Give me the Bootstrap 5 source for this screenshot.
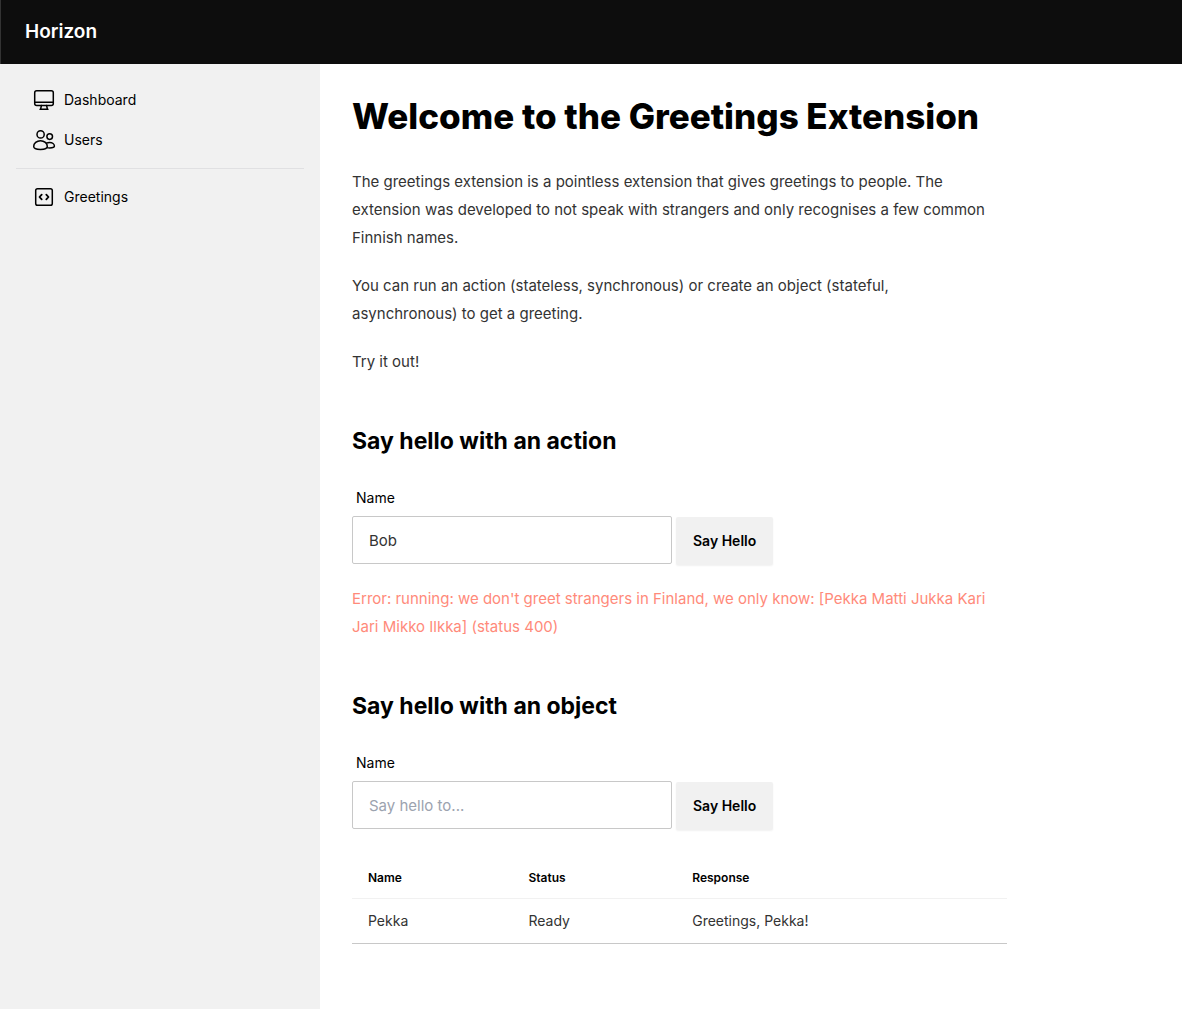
<!DOCTYPE html>
<html lang="en">
<head>
<meta charset="utf-8">
<meta name="viewport" content="width=device-width, initial-scale=1">
<title>Horizon</title>
<link href="https://cdn.jsdelivr.net/npm/bootstrap@5.3.0/dist/css/bootstrap.min.css" rel="stylesheet">
<style>
  body { font-family: Inter, "Liberation Sans", sans-serif; color: #000; }
  .topbar { background: #0d0d0d; min-height: 64px; border-left: 1px solid #333; }
  .topbar .navbar-brand { font-size: 19px; line-height: 28px; font-weight: 600; color: #fff; }
  .sidebar { width: 320px; background: #f1f1f1; }
  .sidebar .nav-link { color: #000; font-size: 14px; line-height: 20px; padding: 8px 16px; gap: 8px; }
  .sidebar svg { width: 24px; height: 24px; fill: none; stroke: currentColor; stroke-width: 1.5; stroke-linecap: round; stroke-linejoin: round; }
  .sidebar hr { border-color: #e0e0e2; opacity: 1; }
  .prose { max-width: 655px; font-size: 15px; line-height: 28px; color: #333; }
  .prose h1 { font-size: 35px; line-height: 40px; font-weight: 800; color: #000; margin-bottom: 32px; }
  .prose h2 { font-size: 23px; line-height: 34px; font-weight: 700; color: #000; margin: 48px 0 22px; }
  .prose p { margin-bottom: 20px; }
  .prose .form-label { font-size: 14px; line-height: 20px; padding: 8px 4px; color: #000; }
  .prose .form-control { width: 320px; height: 48px; padding: 0 16px; font-size: 15px; border: 1px solid #c8c8c8; border-radius: 2px; color: #333; }
  .prose .form-control::placeholder { color: #9ca3af; }
  .btn-hello { --bs-btn-bg: #f1f1f1; --bs-btn-color: #000; --bs-btn-hover-bg: #e2e2e2; --bs-btn-font-size: 14px; --bs-btn-font-weight: 600; --bs-btn-border-radius: 2px; --bs-btn-padding-x: 16px; --bs-btn-line-height: 20px; height: 48px; margin-top: 1px; box-shadow: 0 1px 2px rgba(0,0,0,.06); }
  .error-text { color: #ff8a7a; margin-top: 20px; }
  .results { margin: 28px 0 32px; font-size: 14px; line-height: 20px; --bs-table-color: #333; --bs-table-bg: transparent; }
  .results th { font-size: 12px; line-height: 16px; font-weight: 600; color: #000; padding: 12px 16px; border-bottom: 1px solid #f1f1f1; }
  .results td { padding: 12px 16px; border-bottom: 1px solid #c8c8c8; }
</style>
<script src="https://cdn.jsdelivr.net/npm/bootstrap@5.3.0/dist/js/bootstrap.bundle.min.js"></script>
</head>
<body class="d-flex flex-column min-vh-100">
<header class="navbar topbar p-0">
  <a class="navbar-brand px-4 py-0 m-0" href="#">Horizon</a>
</header>
<div class="d-flex flex-grow-1">
  <aside class="sidebar flex-shrink-0 p-3">
    <nav class="nav flex-column">
      <a class="nav-link d-flex align-items-center" href="#">
        <svg viewBox="0 0 24 24" aria-hidden="true"><rect x="2.7" y="2.7" width="18.6" height="14.8" rx="2"/><path d="M2.7 14.3h18.6M9.4 17.5l-.8 3.6M14.6 17.5l.8 3.6M8 21.3h8"/></svg>
        Dashboard</a>
      <a class="nav-link d-flex align-items-center" href="#">
        <svg viewBox="0 0 24 24" aria-hidden="true"><circle cx="8.6" cy="6.4" r="3.6"/><circle cx="17.7" cy="8.6" r="2.8"/><path d="M8.5 12.7c-3.8 0-6.8 2.7-6.8 5.8 0 1.700 2.700 2.900 6.800 2.900s6.800-1.200 6.800-2.900c0-3.100-3-5.800-6.800-5.800zM14.200 15.500c1-.7 2.200-1 3.500-1 2.700 0 4.700 1.600 4.700 3.500 0 1.200-1.900 1.900-4.700 1.900-1 0-1.900-.1-2.600-.3"/></svg>
        Users</a>
      <hr class="my-2">
      <a class="nav-link d-flex align-items-center" href="#">
        <svg viewBox="0 0 24 24" aria-hidden="true"><rect x="3.7" y="3.7" width="16.6" height="16.6" rx="1.8"/><path stroke-width="1.8" d="M9.700 9.600 7.500 12l2.200 2.400M14.300 9.600l2.200 2.400-2.200 2.400"/></svg>
        Greetings</a>
    </nav>
  </aside>
  <main class="flex-grow-1 p-4">
    <div class="prose m-2">
      <h1>Welcome to the Greetings Extension</h1>
      <p>The greetings extension is a pointless extension that gives greetings to people. The extension was developed to not speak with strangers and only recognises a few common Finnish names.</p>
      <p>You can run an action (stateless, synchronous) or create an object (stateful,<br>asynchronous) to get a greeting.</p>
      <p>Try it out!</p>
      <h2>Say hello with an action</h2>
      <form>
        <label class="form-label d-block m-0" for="action-name">Name</label>
        <div class="d-flex gap-1">
          <input class="form-control" id="action-name" type="text" value="Bob">
          <button class="btn btn-hello" type="button">Say Hello</button>
        </div>
      </form>
      <p class="error-text">Error: running: we don't greet strangers in Finland, we only know: [Pekka Matti Jukka Kari Jari Mikko Ilkka] (status 400)</p>
      <h2>Say hello with an object</h2>
      <form>
        <label class="form-label d-block m-0" for="object-name">Name</label>
        <div class="d-flex gap-1">
          <input class="form-control" id="object-name" type="text" placeholder="Say hello to...">
          <button class="btn btn-hello" type="button">Say Hello</button>
        </div>
      </form>
      <table class="table results">
        <colgroup><col style="width:24.5%"><col style="width:25%"><col></colgroup>
        <thead><tr><th scope="col">Name</th><th scope="col">Status</th><th scope="col">Response</th></tr></thead>
        <tbody><tr><td>Pekka</td><td>Ready</td><td>Greetings, Pekka!</td></tr></tbody>
      </table>
    </div>
  </main>
</div>
</body>
</html>
